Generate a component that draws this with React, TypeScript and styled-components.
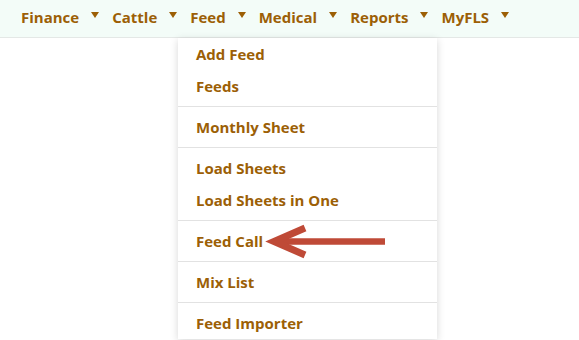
import React from 'react';
import styled, { createGlobalStyle } from 'styled-components';

const TEXT = '#9c5f06';

const GlobalStyle = createGlobalStyle`
  body {
    margin: 0;
    background: #ffffff;
    font-family: 'Open Sans', 'Noto Sans', sans-serif;
  }
`;

const Page = styled.div`
  position: relative;
  width: 579px;
  height: 340px;
  overflow: hidden;
`;

const NavBar = styled.nav`
  display: flex;
  align-items: center;
  height: 38px;
  padding: 0 0 4px 21px;
  box-sizing: border-box;
  background: #f3fcf8;
  border-bottom: 1px solid #e4e8e6;
`;

const NavItem = styled.div`
  display: flex;
  align-items: center;
  margin-right: 13px;
  color: ${TEXT};
  font-size: 15px;
  font-weight: 700;
  line-height: 20px;
`;

const Caret = styled.span`
  display: inline-block;
  margin-left: 12px;
  width: 0;
  height: 0;
  border-left: 4px solid transparent;
  border-right: 4px solid transparent;
  border-top: 6px solid ${TEXT};
  margin-top: -3px;
`;

const Dropdown = styled.div`
  position: absolute;
  left: 178px;
  top: 38px;
  width: 259px;
  background: #ffffff;
  box-shadow: 0 2px 8px rgba(0, 0, 0, 0.16);
`;

const MenuItem = styled.div`
  padding: 6px 18px;
  color: ${TEXT};
  font-size: 15px;
  font-weight: 700;
  line-height: 20px;
`;

const Divider = styled.div`
  height: 1px;
  margin: 4px 0;
  background: #e2e2e2;
`;

const Pointer = styled.svg`
  position: absolute;
  left: 263px;
  top: 220px;
`;

const navItems = ['Finance', 'Cattle', 'Feed', 'Medical', 'Reports', 'MyFLS'];

const groups = [
  ['Add Feed', 'Feeds'],
  ['Monthly Sheet'],
  ['Load Sheets', 'Load Sheets in One'],
  ['Feed Call'],
  ['Mix List'],
  ['Feed Importer'],
];

export default function App() {
  return (
    <Page>
      <GlobalStyle />
      <NavBar>
        {navItems.map((name) => (
          <NavItem key={name}>
            {name}
            <Caret />
          </NavItem>
        ))}
      </NavBar>
      <Dropdown>
        {groups.map((group, i) => (
          <React.Fragment key={i}>
            {i > 0 && <Divider />}
            {group.map((label) => (
              <MenuItem key={label}>{label}</MenuItem>
            ))}
          </React.Fragment>
        ))}
      </Dropdown>
      <Pointer width="130" height="45" viewBox="0 0 130 45">
        {/* red annotation arrow */}
        <line x1="14" y1="21.5" x2="122" y2="21.5" stroke="#bf4a37" strokeWidth="6.5" />
        <polyline
          points="42,8 11,21.5 42,35"
          fill="none"
          stroke="#bf4a37"
          strokeWidth="7"
          strokeLinejoin="miter"
          strokeMiterlimit="10"
        />
      </Pointer>
    </Page>
  );
}
